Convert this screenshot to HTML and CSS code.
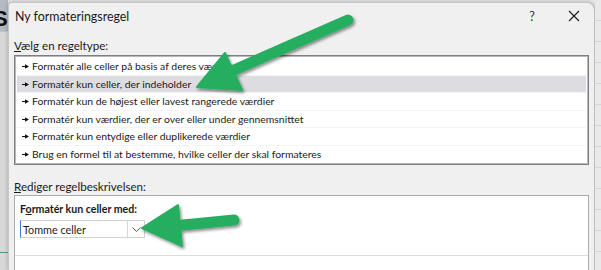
FILE: index.html
```html
<!DOCTYPE html>
<html lang="da">
<head>
<meta charset="utf-8">
<title>Ny formateringsregel</title>
<link rel="stylesheet" href="styles.css">
</head>
<body>
<div class="desk">
  <div class="strip-left">
    <div class="strip-top"><span class="big-s">S</span></div>
    <div class="strip-rest"></div>
  </div>
  <div class="dialog">
    <div class="titlebar">
      <span class="title">Ny formateringsregel</span>
      <span class="tb-help">?</span>
      <span class="tb-close">
        <svg width="12" height="12" viewBox="0 0 12 12"><path d="M1 1 L11 11 M11 1 L1 11" stroke="#1a1a1a" stroke-width="1.1" fill="none"/></svg>
      </span>
    </div>
    <div class="content">
      <div class="label"><u>V</u>ælg en regeltype:</div>
      <div class="listbox">
        <div class="row"><svg class="pen" width="7" height="5" viewBox="0 0 7 5"><path d="M0 2h3v1H0z M3 0.3 L7 2.5 L3 4.7z" fill="#111"/></svg>Formatér alle celler på basis af deres værdier</div>
        <div class="row sel"><svg class="pen" width="7" height="5" viewBox="0 0 7 5"><path d="M0 2h3v1H0z M3 0.3 L7 2.5 L3 4.7z" fill="#111"/></svg>Formatér kun celler, der indeholder</div>
        <div class="row"><svg class="pen" width="7" height="5" viewBox="0 0 7 5"><path d="M0 2h3v1H0z M3 0.3 L7 2.5 L3 4.7z" fill="#111"/></svg>Formatér kun de højest eller lavest rangerede værdier</div>
        <div class="row"><svg class="pen" width="7" height="5" viewBox="0 0 7 5"><path d="M0 2h3v1H0z M3 0.3 L7 2.5 L3 4.7z" fill="#111"/></svg>Formatér kun værdier, der er over eller under gennemsnittet</div>
        <div class="row"><svg class="pen" width="7" height="5" viewBox="0 0 7 5"><path d="M0 2h3v1H0z M3 0.3 L7 2.5 L3 4.7z" fill="#111"/></svg>Formatér kun entydige eller duplikerede værdier</div>
        <div class="row last"><svg class="pen" width="7" height="5" viewBox="0 0 7 5"><path d="M0 2h3v1H0z M3 0.3 L7 2.5 L3 4.7z" fill="#111"/></svg>Brug en formel til at bestemme, hvilke celler der skal formateres</div>
      </div>
      <div class="label label2"><u>R</u>ediger regelbeskrivelsen:</div>
      <div class="descbox">
        <div class="desc-head">F<u>o</u>rmatér kun celler med:</div>
        <div class="combo">
          <span class="combo-text">Tomme celler</span>
          <span class="combo-btn"><svg width="9" height="5" viewBox="0 0 9 5"><path d="M0.5 0.5 L4.5 4.5 L8.5 0.5" stroke="#555" stroke-width="1" fill="none"/></svg></span>
        </div>
        <div class="desc-sep"></div>
      </div>
    </div>
  </div>
  <div class="strip-right"></div>
</div>
<svg class="arrows" width="601" height="270" viewBox="0 0 601 270">
  <defs>
    <filter id="sh" x="-20%" y="-20%" width="140%" height="140%">
      <feDropShadow dx="1.5" dy="2" stdDeviation="1.6" flood-color="#000" flood-opacity="0.45"/>
    </filter>
  </defs>
  <g filter="url(#sh)" fill="#27ae60" stroke="#27ae60" stroke-linejoin="round">
    <path d="M348 20 L225 74" stroke-width="11" stroke-linecap="round" fill="none"/>
    <path d="M197 87 L225 53 L242 90 Z" stroke-width="2"/>
    <path d="M234 220 Q205 223 172 226" stroke-width="11" stroke-linecap="round" fill="none"/>
    <path d="M142 228 L178 205 L182 246 Z" stroke-width="2"/>
  </g>
</svg>
</body>
</html>
```
FILE: styles.css
```css
html, body {
  margin: 0;
  padding: 0;
}
body {
  width: 601px;
  height: 270px;
  overflow: hidden;
  position: relative;
  font-family: Lato, "Noto Sans", sans-serif;
  color: #1a1a1a;
  background: #e6e6e6;
}
.desk {
  display: flex;
  height: 270px;
}
.strip-left {
  width: 8px;
  display: flex;
  flex-direction: column;
  flex-shrink: 0;
}
.strip-top {
  height: 31px;
  background: #b4bac2;
  overflow: hidden;
}
.big-s {
  font-family: "Liberation Sans", sans-serif;
  font-weight: bold;
  font-size: 22px;
  line-height: 22px;
  display: block;
  margin-top: 8px;
  margin-left: -7px;
  color: #111;
}
.strip-rest {
  flex: 1;
  background: #d8d8d8;
  border-top: 1px solid #c4c4c4;
}
.strip-rest::after {
  content: "";
  display: block;
  margin-top: 220px;
  height: 1px;
  background: #5a9a6a;
}
.dialog {
  flex: 1;
  margin-top: 2px;
  background: #f0f0f0;
  border: 1px solid #c6c6c6;
  border-right-color: #bdbdbd;
  border-bottom: none;
  border-radius: 4px 8px 0 0;
  box-shadow: 0 0 4px rgba(0,0,0,0.25);
  display: flex;
  flex-direction: column;
  min-width: 0;
  overflow: hidden;
}
.strip-right {
  width: 6px;
  flex-shrink: 0;
  background: repeating-linear-gradient(#e9e9e9 0, #e9e9e9 20px, #d4d4d4 20px, #d4d4d4 21px);
}
.titlebar {
  height: 26px;
  flex-shrink: 0;
  display: flex;
  align-items: center;
  padding-left: 6px;
}
.title {
  font-size: 12.4px;
  flex: 1;
}
.tb-help {
  font-size: 12.5px;
  width: 20px;
  text-align: center;
  margin-right: 26px;
  color: #333;
}
.tb-close {
  width: 12px;
  margin-right: 14px;
  display: flex;
  align-items: center;
}
.content {
  flex-shrink: 0;
  padding: 0 5px;
  display: flex;
  flex-direction: column;
}
.label {
  font-size: 11.6px;
  height: 17px;
  line-height: 17px;
  margin-top: 8px;
  margin-bottom: 1px;
}
.label2 {
  margin-top: 13px;
  margin-bottom: 0;
}
.listbox {
  background: #fff;
  border: 1px solid #7e7e82;
  box-shadow: inset 0 0 0 1px #b8b8bc;
  padding: 2px;
  box-sizing: border-box;
  height: 110px;
}
.row {
  height: 17.5px;
  line-height: 17.5px;
  font-size: 10.4px;
  display: flex;
  align-items: center;
  padding-left: 5px;
  white-space: nowrap;
  overflow: hidden;
  box-shadow: inset 0 -1px 0 #f4f4f4;
}
.row.last {
  box-shadow: none;
}
.row.sel {
  background: #dcdce1;
}
.pen {
  margin-right: 3px;
  flex-shrink: 0;
}
.descbox {
  background: #fff;
  border: 1px solid #acacac;
  border-bottom: none;
  height: 80px;
  padding: 5px 0 0 5px;
}
.desc-head {
  font-size: 10.6px;
  font-weight: bold;
  line-height: 16px;
  height: 16px;
}
.combo {
  margin-top: 3px;
  width: 123px;
  height: 16px;
  border: 1px solid #d0d0d0;
  border-left: 1px solid #3d7bd8;
  display: flex;
  align-items: center;
  background: #fff;
}
.combo-text {
  flex: 1;
  font-size: 10.8px;
  padding-left: 2px;
}
.combo-btn {
  width: 16px;
  height: 16px;
  border-left: 1px solid #d8d8d8;
  display: flex;
  align-items: center;
  justify-content: center;
}
.desc-sep {
  margin-top: 17px;
  margin-left: -5px;
  height: 1px;
  background: #dcdcdc;
}
.arrows {
  position: absolute;
  left: 0;
  top: 0;
  pointer-events: none;
}
```
